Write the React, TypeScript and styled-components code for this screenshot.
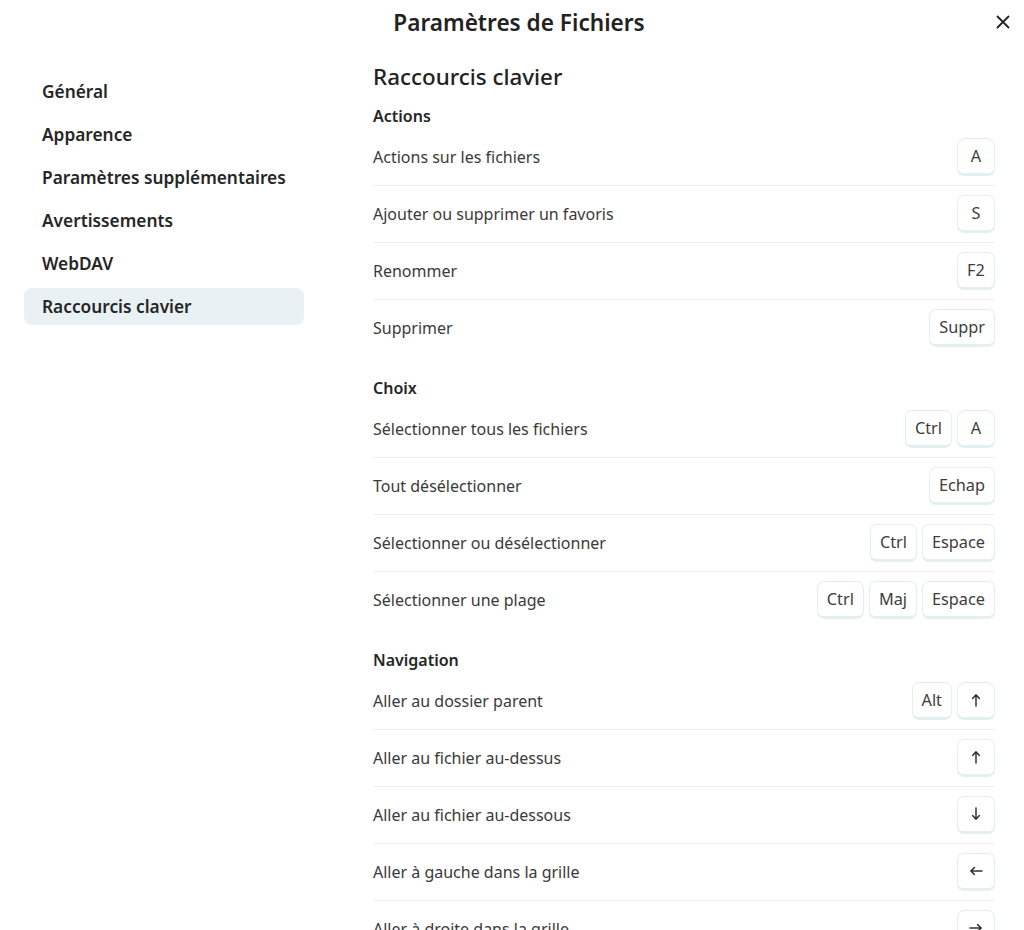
import styled, { createGlobalStyle } from "styled-components";

const GlobalStyle = createGlobalStyle`
  html, body {
    margin: 0;
    padding: 0;
    background: #ffffff;
  }
  body {
    font-family: "Noto Sans", "Open Sans", sans-serif;
    color: #2e2e2e;
  }
`;

type Arrow = "up" | "down" | "left" | "right";

interface Shortcut {
  label: string;
  keys: (string | { arrow: Arrow })[];
}

interface Section {
  title: string;
  items: Shortcut[];
}

const sections: Section[] = [
  {
    title: "Actions",
    items: [
      { label: "Actions sur les fichiers", keys: ["A"] },
      { label: "Ajouter ou supprimer un favoris", keys: ["S"] },
      { label: "Renommer", keys: ["F2"] },
      { label: "Supprimer", keys: ["Suppr"] },
    ],
  },
  {
    title: "Choix",
    items: [
      { label: "Sélectionner tous les fichiers", keys: ["Ctrl", "A"] },
      { label: "Tout désélectionner", keys: ["Echap"] },
      { label: "Sélectionner ou désélectionner", keys: ["Ctrl", "Espace"] },
      { label: "Sélectionner une plage", keys: ["Ctrl", "Maj", "Espace"] },
    ],
  },
  {
    title: "Navigation",
    items: [
      { label: "Aller au dossier parent", keys: ["Alt", { arrow: "up" }] },
      { label: "Aller au fichier au-dessus", keys: [{ arrow: "up" }] },
      { label: "Aller au fichier au-dessous", keys: [{ arrow: "down" }] },
      { label: "Aller à gauche dans la grille", keys: [{ arrow: "left" }] },
      { label: "Aller à droite dans la grille", keys: [{ arrow: "right" }] },
    ],
  },
];

const menu = [
  "Général",
  "Apparence",
  "Paramètres supplémentaires",
  "Avertissements",
  "WebDAV",
  "Raccourcis clavier",
];

const Dialog = styled.div`
  width: 1024px;
  height: 930px;
  overflow: hidden;
  background: #fff;
  display: flex;
  flex-direction: column;
`;

const Header = styled.header`
  position: relative;
  height: 44px;
  padding-left: 14px;
  display: flex;
  align-items: center;
  justify-content: center;
  flex-shrink: 0;
`;

const DialogTitle = styled.h1`
  margin: 0;
  font-size: 22.6px;
  font-weight: 600;
  color: #222;
`;

const CloseButton = styled.button`
  position: absolute;
  right: 8px;
  top: 9px;
  width: 26px;
  height: 26px;
  border: none;
  background: transparent;
  padding: 0;
  display: flex;
  align-items: center;
  justify-content: center;
  cursor: pointer;
`;

const Body = styled.div`
  display: grid;
  grid-template-columns: 280px 1fr;
  column-gap: 69px;
  padding: 0 29px 0 24px;
`;

const Nav = styled.nav`
  display: flex;
  flex-direction: column;
  gap: 6px;
  padding-top: 29px;
`;

const NavItem = styled.div<{ $active?: boolean }>`
  height: 37px;
  display: flex;
  align-items: center;
  padding: 0 18px;
  border-radius: 8px;
  white-space: nowrap;
  font-size: 17.3px;
  font-weight: 600;
  color: #262626;
  background: ${(p) => (p.$active ? "#eaf1f4" : "transparent")};
`;

const Content = styled.main`
  display: flex;
  flex-direction: column;
  padding-top: 18px;
`;

const Heading = styled.h2`
  margin: 0 0 12px;
  height: 30px;
  line-height: 30px;
  font-size: 22.4px;
  font-weight: 500;
  color: #222;
`;

const Group = styled.section`
  display: flex;
  flex-direction: column;
  & + & {
    margin-top: 20px;
  }
`;

const GroupTitle = styled.h3`
  margin: 0;
  height: 24px;
  line-height: 24px;
  font-size: 16px;
  font-weight: 600;
  color: #262626;
`;

const Row = styled.div`
  height: 57px;
  display: flex;
  align-items: center;
  justify-content: space-between;
  font-size: 16px;
  color: #3a3a3a;
  & + & {
    border-top: 1px solid #ededed;
    height: 56px;
  }
`;

const Keys = styled.div`
  display: flex;
  gap: 5px;
`;

const Key = styled.kbd`
  box-sizing: border-box;
  min-width: 38px;
  height: 38px;
  padding: 0 9px;
  display: flex;
  align-items: center;
  justify-content: center;
  border: 1px solid #e4eff1;
  border-bottom-width: 3px;
  border-radius: 7px;
  background: #fff;
  font-family: inherit;
  font-size: 16.3px;
  color: #3d3d3d;
`;

const arrowRotation: Record<Arrow, number> = {
  up: 0,
  right: 90,
  down: 180,
  left: 270,
};

// thin arrow drawn pointing up, rotated for the other directions
const ArrowIcon = ({ dir }: { dir: Arrow }) => (
  <svg
    width="14"
    height="14"
    viewBox="0 0 14 14"
    style={{ transform: `rotate(${arrowRotation[dir]}deg)` }}
  >
    <path
      d="M7 13 V2 M3.6 5.4 L7 1.8 L10.4 5.4"
      fill="none"
      stroke="#333"
      strokeWidth="1.5"
      strokeLinecap="round"
      strokeLinejoin="round"
    />
  </svg>
);

const CloseIcon = () => (
  <svg width="14" height="14" viewBox="0 0 14 14">
    <path
      d="M1.5 1.5 L12.5 12.5 M12.5 1.5 L1.5 12.5"
      stroke="#222"
      strokeWidth="1.8"
      strokeLinecap="round"
    />
  </svg>
);

const App = () => {
  return (
    <>
      <GlobalStyle />
      <Dialog>
        <Header>
          <DialogTitle>Paramètres de Fichiers</DialogTitle>
          <CloseButton aria-label="Fermer">
            <CloseIcon />
          </CloseButton>
        </Header>
        <Body>
          <Nav>
            {menu.map((m) => (
              <NavItem key={m} $active={m === "Raccourcis clavier"}>
                {m}
              </NavItem>
            ))}
          </Nav>
          <Content>
            <Heading>Raccourcis clavier</Heading>
            {sections.map((s) => (
              <Group key={s.title}>
                <GroupTitle>{s.title}</GroupTitle>
                {s.items.map((it) => (
                  <Row key={it.label}>
                    <span>{it.label}</span>
                    <Keys>
                      {it.keys.map((k, i) => (
                        <Key key={i}>
                          {typeof k === "string" ? k : <ArrowIcon dir={k.arrow} />}
                        </Key>
                      ))}
                    </Keys>
                  </Row>
                ))}
              </Group>
            ))}
          </Content>
        </Body>
      </Dialog>
    </>
  );
};

export default App;
